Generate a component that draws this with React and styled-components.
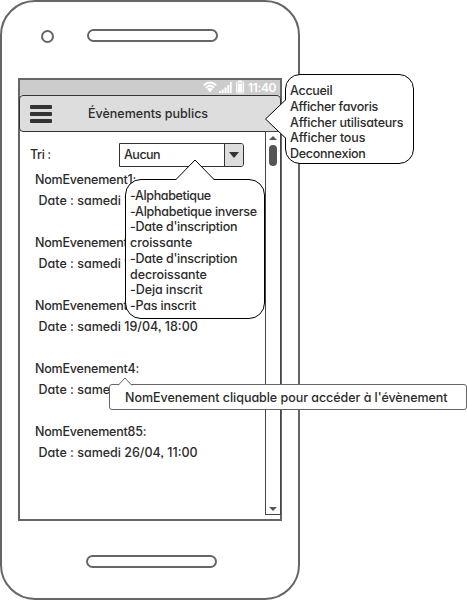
import React from "react";
import styled, { createGlobalStyle } from "styled-components";

const GlobalStyle = createGlobalStyle`
  * { box-sizing: border-box; }
  body { margin: 0; background: #fff; }
`;

const Page = styled.div`
  position: relative;
  width: 467px;
  height: 600px;
  overflow: hidden;
  color: #2b2b2b;
  font: 500 12.5px/16px Inter, "Open Sans", sans-serif;
  font-feature-settings: "cv11", "ss03";
`;

const Text = styled.span`
  display: block;
  white-space: pre;
  letter-spacing: ${(p) => p.$spacing || 0}px;
`;

const Phone = styled.div`
  display: flex;
  flex-direction: column;
  width: 300px;
  height: 600px;
  padding: 0 16px;
  border: 2px solid #666;
  border-radius: 35px;
  background: #fff;
`;

const PhoneTop = styled.div`
  display: flex;
  align-items: flex-start;
  gap: 33px;
  height: 76px;
  flex: none;
  padding: 28px 0 0 22.5px;
`;

const Camera = styled.div`
  width: 13px;
  height: 13px;
  border: 2px solid #666;
  border-radius: 50%;
`;

const Pill = styled.div`
  width: 131px;
  height: 13px;
  margin-top: -1px;
  border: 2px solid #666;
  border-radius: 7px;
`;

const PhoneBottom = styled.div`
  padding: 34.5px 0 0 67.5px;
`;

const Screen = styled.div`
  display: flex;
  flex-direction: column;
  width: 264px;
  height: 443px;
  flex: none;
  border: 2px solid #666;
`;

const StatusBar = styled.div`
  display: flex;
  align-items: center;
  justify-content: flex-end;
  height: 15px;
  flex: none;
  padding-right: 4px;
  background: #ccc;
  color: #fff;
  font-size: 12px;
  font-weight: 600;
`;

const Header = styled.div`
  display: flex;
  align-items: center;
  height: 37px;
  flex: none;
  margin: 0 -1px;
  padding-left: 10px;
  gap: 36px;
  border: 1px solid #333;
  border-radius: 4px;
  background: #ddd;
`;

const Burger = styled.div`
  display: grid;
  gap: 3px;
  width: 22px;
`;

const Bar = styled.i`
  height: 4px;
  border-radius: 1px;
  background: #333;
`;

const Body = styled.div`
  display: flex;
  justify-content: space-between;
  flex: 1;
  margin: -1px -1px 0 0;
`;

const Content = styled.div`
  padding-top: 12px;
`;

const SortRow = styled.div`
  display: flex;
  align-items: center;
  justify-content: space-between;
  width: 224px;
  height: 24px;
  padding-left: 10px;
`;

const Select = styled.div`
  display: flex;
  justify-content: space-between;
  width: 125px;
  height: 24px;
  border: 1px solid #333;
  border-radius: 0 3px 3px 0;
  line-height: 22px;
  padding-left: 4px;
`;

const SelectArrow = styled.div`
  display: flex;
  align-items: center;
  justify-content: center;
  width: 19px;
  border-left: 1px solid #333;
  border-radius: 0 2px 2px 0;
  background: #ddd;
`;

const List = styled.div`
  display: grid;
  grid-auto-rows: 63px;
  padding: 2px 0 0 15px;
`;

const Event = styled.div`
  line-height: 21px;
`;

const EventDate = styled.div`
  padding-left: 3.5px;
`;

const ScrollBar = styled.div`
  display: flex;
  flex-direction: column;
  align-items: center;
  width: 16px;
  height: 384px;
  padding: 4px 0 3px;
  border: 1px solid #444;
`;

const Thumb = styled.div`
  width: 8px;
  height: 21px;
  margin: 5px 0 auto;
  border-radius: 4px;
  background: #555;
`;

const Bubble = styled.div`
  position: absolute;
  left: ${(p) => p.$x}px;
  top: ${(p) => p.$y}px;
  width: ${(p) => p.$w}px;
  height: ${(p) => p.$h}px;
  padding: ${(p) => p.$pad};
  border: 1px solid ${(p) => p.$line || "#000"};
  border-radius: ${(p) => p.$radius}px;
  background: #fff;
  line-height: ${(p) => p.$leading}px;
`;

const Pointer = styled.svg`
  position: absolute;
  left: ${(p) => p.$x}px;
  top: ${(p) => p.$y}px;
  fill: #fff;
  stroke: ${(p) => p.$line || "#000"};
`;

const events = [
  ["NomEvenement1:", "Date : samedi 12/04, 11:00"],
  ["NomEvenement2:", "Date : samedi 12/04, 18:00"],
  ["NomEvenement3:", "Date : samedi 19/04, 18:00"],
  ["NomEvenement4:", "Date : samedi 26/04, 11:00"],
  ["NomEvenement85:", "Date : samedi 26/04, 11:00"],
];

const menu = [
  ["Accueil", -0.3],
  ["Afficher favoris", -0.3],
  ["Afficher utilisateurs", -0.2],
  ["Afficher tous", -0.15],
  ["Deconnexion", -0.26],
];

const sorts = [
  ["-Alphabetique", -0.35],
  ["-Alphabetique inverse", -0.27],
  ["-Date d'inscription", -0.24],
  ["croissante", -0.05],
  ["-Date d'inscription", -0.24],
  ["decroissante", -0.08],
  ["-Deja inscrit", -0.08],
  ["-Pas inscrit", -0.2],
];

function StatusIcons() {
  return (
    <svg width="45" height="15" viewBox="0 0 45 15" fill="#fff">
      <g fill="none" stroke="#fff" strokeWidth="1.9">
        <path d="M.7 5.4Q7 -.2 13.3 5.4" />
        <path d="M2.8 7.7Q7 4 11.2 7.7" />
        <path d="M4.8 9.8Q7 7.8 9.2 9.8" />
      </g>
      <path d="M5.3 10.3Q7 9 8.7 10.3L7 12.5Z" />
      <path d="M16 11h2v2h-2zM18.700 9.500h2V13h-2zM21.500 7.500h2V13h-2zM24.300 5h2v8h-2zM27 2h1.700v11H27z" />
      <path d="M35 .6h4V2h-4z" />
      <rect x="33.600" y="2" width="7" height="11" rx=".8" fill="none" stroke="#fff" />
      <path d="M34.700 3.500h4.800v8.500h-4.800z" />
    </svg>
  );
}

export default function App() {
  return (
    <Page>
      <GlobalStyle />
      <Phone>
        <PhoneTop>
          <Camera />
          <Pill />
        </PhoneTop>
        <Screen>
          <StatusBar>
            <StatusIcons />
            <Text $spacing={-0.4}>11:40</Text>
          </StatusBar>
          <Header>
            <Burger>
              <Bar />
              <Bar />
              <Bar />
            </Burger>
            <Text>Évènements publics</Text>
          </Header>
          <Body>
            <Content>
              <SortRow>
                <Text $spacing={-0.4}>Tri :</Text>
                <Select>
                  <Text $spacing={-0.5}>Aucun</Text>
                  <SelectArrow>
                    <svg width="10" height="6">
                      <path d="M0 0H10L5 6Z" fill="#333" />
                    </svg>
                  </SelectArrow>
                </Select>
              </SortRow>
              <List>
                {events.map(([name, date]) => (
                  <Event key={name}>
                    <Text $spacing={-0.2}>{name}</Text>
                    <EventDate>
                      <Text>{date}</Text>
                    </EventDate>
                  </Event>
                ))}
              </List>
            </Content>
            <ScrollBar>
              <svg width="8" height="4">
                <path d="M0 4H8L4 0Z" fill="#555" />
              </svg>
              <Thumb />
              <svg width="8" height="4">
                <path d="M0 0H8L4 4Z" fill="#555" />
              </svg>
            </ScrollBar>
          </Body>
        </Screen>
        <PhoneBottom>
          <Pill />
        </PhoneBottom>
      </Phone>

      <Bubble $x={285} $y={74} $w={129} $h={90} $pad="8px 0 0 4px" $radius={15} $leading={15.8}>
        {menu.map(([t, s]) => (
          <Text key={t} $spacing={s}>{t}</Text>
        ))}
      </Bubble>
      <Pointer $x={264} $y={99} width="23" height="40">
        <path d="M22 .5L1.500 20L22 39.500" />
      </Pointer>

      <Bubble $x={125} $y={179} $w={140} $h={140} $pad="8px 0 0 4px" $radius={16} $leading={15.7}>
        {sorts.map(([t, s], i) => (
          <Text key={i} $spacing={s}>{t}</Text>
        ))}
      </Bubble>
      <Pointer $x={175} $y={159} width="40" height="22">
        <path d="M.5 21L20 1L39.500 21" />
      </Pointer>

      <Bubble $x={109} $y={384} $w={358} $h={26} $pad="0 0 0 15px" $radius={3} $leading={25} $line="#666">
        <Text $spacing={-0.04}>NomEvenement cliquable pour accéder à l'évènement</Text>
      </Bubble>
      <Pointer $x={118} $y={377} $line="#666" width="15" height="9">
        <path d="M0 8.500L7 1L14 8.500" />
      </Pointer>
    </Page>
  );
}
